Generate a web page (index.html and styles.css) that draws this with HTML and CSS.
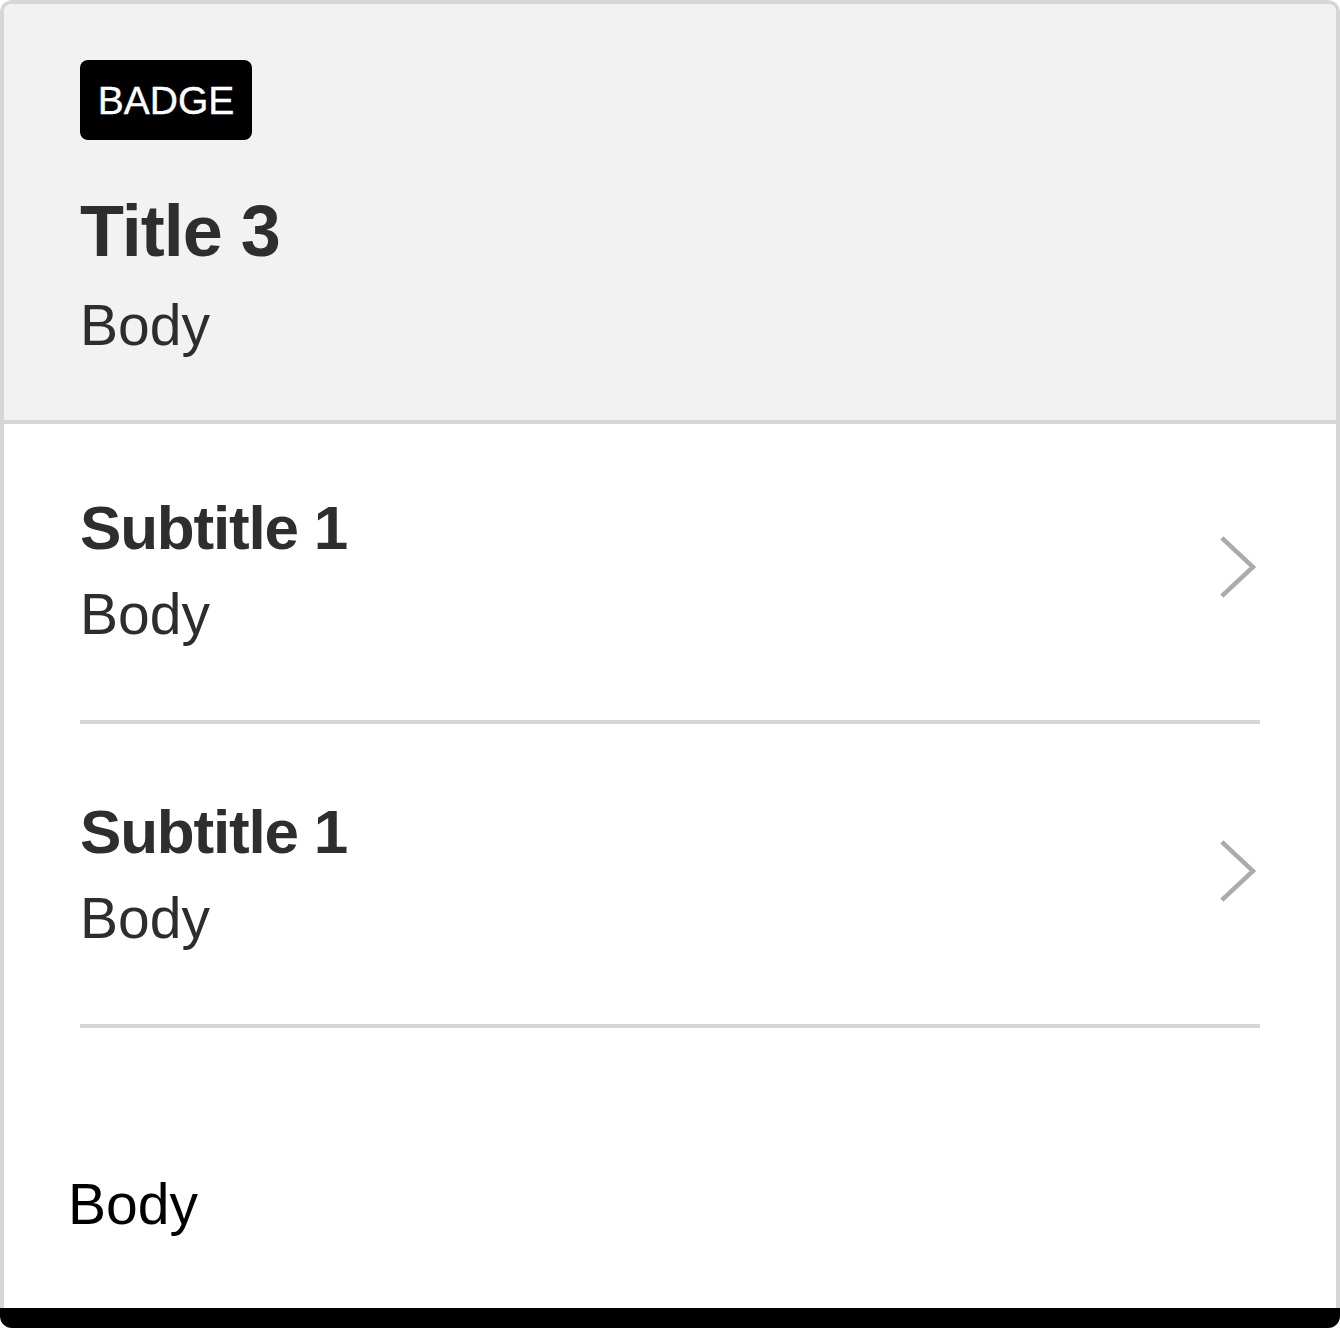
FILE: index.html
```html
<!DOCTYPE html>
<html lang="en">
<head>
<meta charset="utf-8">
<title>Card</title>
<link rel="stylesheet" href="styles.css">
</head>
<body>
<div class="card">
  <div class="frame">
    <header class="hero">
      <span class="badge">BADGE</span>
      <h1 class="title">Title 3</h1>
      <p class="hero-body">Body</p>
    </header>
    <ul class="list">
      <li class="item">
        <div class="item-text">
          <h2 class="subtitle">Subtitle 1</h2>
          <p class="item-body">Body</p>
        </div>
        <svg class="chevron" viewBox="0 0 36 62" width="36" height="62" aria-hidden="true">
          <polyline points="1.8,1.8 33,31 1.8,60.2" fill="none" stroke="#ababab" stroke-width="4.5"/>
        </svg>
      </li>
      <li class="item">
        <div class="item-text">
          <h2 class="subtitle">Subtitle 1</h2>
          <p class="item-body">Body</p>
        </div>
        <svg class="chevron" viewBox="0 0 36 62" width="36" height="62" aria-hidden="true">
          <polyline points="1.8,1.8 33,31 1.8,60.2" fill="none" stroke="#ababab" stroke-width="4.5"/>
        </svg>
      </li>
    </ul>
    <div class="footer">Body</div>
  </div>
  <div class="bar"></div>
</div>
</body>
</html>
```

FILE: styles.css
```css
* { box-sizing: border-box; }

html, body {
  margin: 0;
  padding: 0;
  background: #ffffff;
}

body {
  font-family: "Liberation Sans", Arial, Helvetica, sans-serif;
  color: #2d2d2d;
}

.card {
  width: 1340px;
  height: 1328px;
  border-radius: 12px;
  overflow: hidden;
  display: flex;
  flex-direction: column;
}

.frame {
  flex: 1;
  border: 4px solid #d6d6d6;
  border-bottom: none;
  border-radius: 12px 12px 0 0;
  overflow: hidden;
  background: #ffffff;
  display: flex;
  flex-direction: column;
}

.hero {
  background: #f2f2f2;
  border-bottom: 4px solid #d6d6d6;
  padding: 56px 76px 59px;
  display: flex;
  flex-direction: column;
  align-items: flex-start;
}

.badge {
  display: inline-flex;
  align-items: center;
  justify-content: center;
  height: 80px;
  width: 172px;
  background: #000000;
  color: #ffffff;
  border-radius: 8px;
  font-size: 39px;
  line-height: 1;
  -webkit-text-stroke: 0.4px #ffffff;
}

.title {
  margin: 47px 0 0;
  font-size: 72px;
  line-height: 88px;
  font-weight: 700;
  letter-spacing: -1px;
  color: #2e2e2e;
}

.hero-body {
  margin: 14px 0 0;
  font-size: 57px;
  line-height: 72px;
}

.list {
  list-style: none;
  margin: 0;
  padding: 0;
}

.item {
  margin: 0 76px;
  padding: 70px 4px 70px 0;
  border-bottom: 4px solid #d6d6d6;
  display: flex;
  align-items: center;
  justify-content: space-between;
}

.item:first-child {
  padding-top: 66px;
}

.subtitle {
  margin: 0;
  font-size: 62px;
  line-height: 76px;
  font-weight: 700;
  letter-spacing: -1.2px;
  color: #2e2e2e;
}

.item-body {
  margin: 12px 0 0;
  font-size: 57px;
  line-height: 72px;
}

.chevron {
  display: block;
  margin-bottom: 6px;
}

.footer {
  padding: 140px 64px 0;
  font-size: 57px;
  line-height: 72px;
  color: #000000;
}

.bar {
  height: 20px;
  background: #000000;
  flex: none;
}
```
